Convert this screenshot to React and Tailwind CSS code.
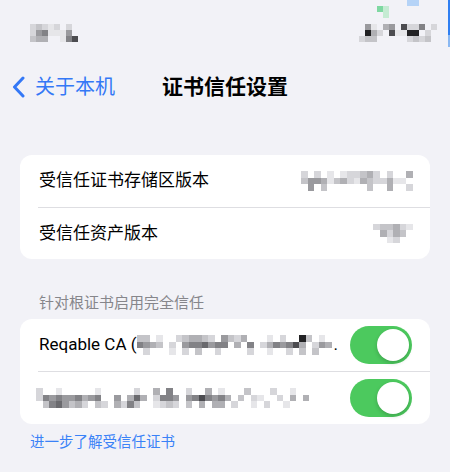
import * as React from "react";

// 马赛克灰阶
const SHADES = {
  "1": "#e6e6e9", "2": "#d6d6da", "3": "#c4c4c8", "4": "#b0b0b4", "5": "#9a9a9e",
  "6": "#828286", "7": "#6a6a6e", "8": "#4c4c50", "9": "#222224",
};

function Mosaic({ rows, cell }) {
  return (
    <div className="flex flex-col shrink-0">
      {rows.map((r, i) => (
        <div key={i} className="flex">
          {r.split("").map((c, j) => (
            <div key={j} className={`shrink-0 ${cell}`} style={{ background: SHADES[c] || "transparent" }} />
          ))}
        </div>
      ))}
    </div>
  );
}

function Toggle() {
  return (
    <div className="w-[62px] h-[38px] shrink-0 rounded-full bg-[#4cc95e] p-[3px] flex justify-end">
      <div className="w-[32px] h-[32px] rounded-full bg-white shadow-[0_2px_4px_rgba(0,0,0,0.18)]" />
    </div>
  );
}

export default function App() {
  return (
    <div className="relative w-[450px] h-[472px] overflow-hidden bg-[#f2f2f7] font-['Roboto','Noto_Sans_CJK_SC',sans-serif]">
      {/* 状态栏 */}
      <div className="h-[60px] flex justify-between items-start pt-[24px] pl-[30px] pr-[13px]">
        <Mosaic cell="w-[6px] h-[6px]" rows={["23212.2.", "2561115.", "344..168"]} />
        <Mosaic cell="w-[6px] h-[6px]" rows={[".51.45.8226.2", ".942.81199.2.", "233.....2323."]} />
      </div>
      <div className="absolute left-[377px] top-[6px] w-[6px] h-[6px] bg-[#7fd8a2]" />
      <div className="absolute left-[383px] top-[6px] w-[6px] h-[12px] bg-[#c5ebd3]" />
      <div className="absolute left-[407px] top-0 w-[12px] h-[6px] bg-[#b5d3f7]" />
      <div className="absolute left-[448px] top-0 w-[2px] h-[35px] bg-[#2f7ff2]" />
      <div className="absolute left-[448px] top-[35px] w-[2px] h-[12px] bg-[#8ab8f2]" />

      {/* 导航栏 */}
      <div className="h-[54px] grid grid-cols-[1fr_auto_1fr] items-center">
        <div className="flex items-center pl-[12px] gap-[10px] text-[#3478f6]">
          <svg width="13" height="22" viewBox="0 0 13 22" fill="none">
            <polyline points="11,2 2.5,11 11,20" stroke="#3478f6" strokeWidth="3" strokeLinecap="round" strokeLinejoin="round" />
          </svg>
          <span className="text-[20px] leading-none">关于本机</span>
        </div>
        <div className="text-[21px] font-semibold text-black leading-none">证书信任设置</div>
        <div />
      </div>

      {/* 版本 */}
      <div className="mt-[41px] mx-[20px] bg-white rounded-[12px] overflow-hidden">
        <div className="h-[52px] flex items-center justify-between pl-[19px] pr-[17px]">
          <span className="text-[17px] text-black">受信任证书存储区版本</span>
          <Mosaic cell="w-[6.6px] h-[6.6px]" rows={["2.2.1.122342.2..4", "3554134214322411.", ".5.3......3..4..2"]} />
        </div>
        <div className="ml-[18px] h-px bg-[#dedee2]" />
        <div className="h-[51px] flex items-center justify-between pl-[19px] pr-[17px]">
          <span className="text-[17px] text-black">受信任资产版本</span>
          <Mosaic cell="w-[6.6px] h-[6.6px]" rows={["233421", ".4243.", "..12.."]} />
        </div>
      </div>

      <div className="mt-[34px] h-[20px] pl-[39px] text-[15px] leading-[20px] text-[#86868b]">针对根证书启用完全信任</div>

      {/* 根证书 */}
      <div className="mt-[6px] mx-[20px] bg-white rounded-[12px] overflow-hidden">
        <div className="h-[52px] flex items-center justify-between pl-[19px] pr-[18px]">
          <div className="flex items-center text-[17px] text-black">
            <span>Reqable CA (</span>
            <Mosaic cell="w-[6.5px] h-[6.6px]" rows={["33.1..234432.5324...1.2..93.1.", "6543.2.5667566.4.6.2465684.254", ".2...1.2.3..2....2..1..2.3.3.."]} />
            <span className="ml-[2px]">.</span>
          </div>
          <Toggle />
        </div>
        <div className="ml-[18px] h-px bg-[#dedee2]" />
        <div className="h-[52px] flex items-center justify-between pl-[16px] pr-[18px]">
          <Mosaic cell="w-[6.5px] h-[6.7px]" rows={["2..1.....1.....2..4.6..2..4.1...3...2..1....", "2656556456..5.474.2665.5686564.3.21..2.4.4..", ".3675342.32.4263..1232.3.4.44.2..1.2..1....."]} />
          <Toggle />
        </div>
      </div>

      <div className="mt-[9px] pl-[30px] text-[14.5px] leading-[20px] text-[#3a82f7]">进一步了解受信任证书</div>
    </div>
  );
}
